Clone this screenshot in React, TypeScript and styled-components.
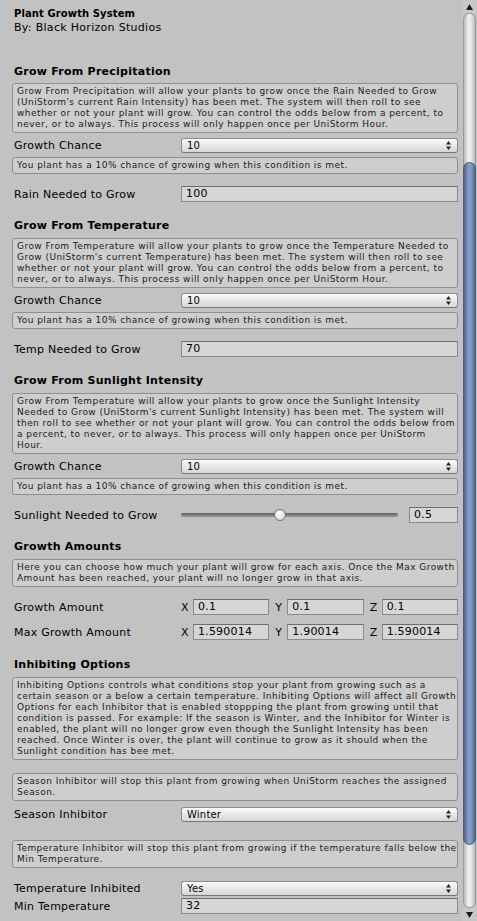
import React from "react";
import styled, { createGlobalStyle } from "styled-components";

const GlobalStyle = createGlobalStyle`
  html, body {
    margin: 0;
    padding: 0;
    background: #c2c2c2;
  }
  body {
    font-family: "DejaVu Sans", Verdana, sans-serif;
    color: #000000;
  }
`;

const Page = styled.div`
  display: flex;
  flex-direction: row;
  width: 477px;
  height: 921px;
  overflow: hidden;
  background-color: #c2c2c2;
`;

const Content = styled.div`
  flex: 1;
  display: flex;
  flex-direction: column;
  padding: 6px 4px 0 12px;
  min-width: 0;
`;

const Title = styled.div`
  padding-left: 2px;
  font-size: 10px;
  font-weight: 700;
  line-height: 16px;
  letter-spacing: 0.1px;
`;

const Subtitle = styled.div`
  margin-top: -2px;
  padding-left: 2px;
  font-size: 11px;
  line-height: 16px;
  letter-spacing: 0.3px;
`;

const SectionHeader = styled.div<{ $top: number }>`
  margin-top: ${(p) => p.$top}px;
  padding-left: 2px;
  font-size: 11px;
  font-weight: 700;
  line-height: 16px;
  letter-spacing: 0.25px;
`;

const HelpBox = styled.div<{ $top: number }>`
  margin-top: ${(p) => p.$top}px;
  padding: 2px 2px 2px 4px;
  border: 1px solid #8f8f8f;
  border-radius: 3px;
  background-color: #cecece;
  color: #1c1c1c;
  font-size: 9px;
  letter-spacing: 0.45px;
  line-height: 11px;
`;

const HelpLine = styled.div`
  white-space: nowrap;
`;

const FieldRow = styled.div<{ $top: number }>`
  margin-top: ${(p) => p.$top}px;
  height: 18px;
  display: flex;
  flex-direction: row;
  align-items: center;
`;

const Label = styled.div`
  width: 167px;
  padding-left: 2px;
  flex-shrink: 0;
  font-size: 11px;
  letter-spacing: 0.25px;
`;

const Controls = styled.div`
  flex: 1;
  display: flex;
  flex-direction: row;
  align-items: center;
  gap: 6px;
  min-width: 0;
`;

const TextField = styled.div<{ $width?: number }>`
  ${(p) => (p.$width ? `width: ${p.$width}px;` : "flex: 1;")}
  box-sizing: border-box;
  height: 16px;
  padding: 0 4px;
  border: 1px solid #8a8a8a;
  border-top-color: #6e6e6e;
  background-color: #d6d6d6;
  font-size: 11px;
  letter-spacing: 0.2px;
  line-height: 14px;
  white-space: nowrap;
  overflow: hidden;
`;

const Dropdown = styled.div`
  flex: 1;
  box-sizing: border-box;
  height: 15px;
  display: flex;
  flex-direction: row;
  align-items: center;
  justify-content: space-between;
  padding: 0 6px 0 5px;
  border: 1px solid #8c8c8c;
  border-bottom-color: #767676;
  border-radius: 3px;
  background: linear-gradient(#fbfbfb, #e4e4e4 60%, #d6d6d6);
  font-size: 10px;
  letter-spacing: 0.2px;
`;

const VectorPart = styled.div`
  flex: 1;
  display: flex;
  flex-direction: row;
  align-items: center;
  min-width: 0;
`;

const AxisLetter = styled.span`
  width: 12px;
  flex-shrink: 0;
  font-size: 11px;
`;

const SliderTrack = styled.div`
  flex: 1;
  position: relative;
  height: 4px;
  margin-right: 5px;
  border-radius: 2px;
  background: linear-gradient(#5f5f5f, #9c9c9c);
`;

const SliderHandle = styled.div`
  position: absolute;
  top: -4px;
  width: 10px;
  height: 10px;
  margin-left: -6px;
  border: 1px solid #6f6f6f;
  border-radius: 50%;
  background: radial-gradient(circle at 40% 35%, #ffffff, #dcdcdc 70%, #c4c4c4);
`;

const Scrollbar = styled.div`
  width: 15px;
  display: flex;
  flex-direction: column;
  align-items: stretch;
`;

const ScrollArrow = styled.div`
  height: 13px;
  display: flex;
  align-items: center;
  justify-content: center;
  background-color: #c8c8c8;
`;

const ScrollTrack = styled.div`
  flex: 1;
  display: flex;
  flex-direction: column;
  margin: 0 1px 0 1px;
  border: 1px solid #9a9a9a;
  border-radius: 7px;
  background: linear-gradient(to right, #b9b9b9, #f1f1f1 40%, #e6e6e6 65%, #bcbcbc);
`;

const ScrollThumb = styled.div`
  margin-top: 148px;
  height: 681px;
  margin-left: -1px;
  margin-right: -1px;
  border: 1px solid #4a5c80;
  border-radius: 7px;
  background: linear-gradient(to right, #4e6490, #8da0c6 45%, #7e92ba 70%, #50658f);
`;

const PopupArrows = () => (
  <svg width="5" height="9" viewBox="0 0 5 9">
    <polygon points="2.5,0 5,3.5 0,3.5" fill="#222" />
    <polygon points="0,5.5 5,5.5 2.5,9" fill="#222" />
  </svg>
);

const ArrowGlyph = ({ down }: { down?: boolean }) => (
  <svg width="7" height="6" viewBox="0 0 7 6">
    {down ? (
      <polygon points="0,0 7,0 3.5,6" fill="#1a1a1a" />
    ) : (
      <polygon points="3.5,0 7,6 0,6" fill="#1a1a1a" />
    )}
  </svg>
);

const Select = ({ value }: { value: string }) => (
  <Dropdown>
    <span>{value}</span>
    <PopupArrows />
  </Dropdown>
);

const Help = ({ top, lines }: { top: number; lines: string[] }) => (
  <HelpBox $top={top}>
    {lines.map((line, i) => (
      <HelpLine key={i}>{line}</HelpLine>
    ))}
  </HelpBox>
);

const Vector3 = ({ x, y, z }: { x: string; y: string; z: string }) => (
  <Controls>
    {[
      ["X", x],
      ["Y", y],
      ["Z", z],
    ].map(([axis, val]) => (
      <VectorPart key={axis}>
        <AxisLetter>{axis}</AxisLetter>
        <TextField>{val}</TextField>
      </VectorPart>
    ))}
  </Controls>
);

const CHANCE_NOTE = ["You plant has a 10% chance of growing when this condition is met."];

const RAIN_HELP = [
  "Grow From Precipitation will allow your plants to grow once the Rain Needed to Grow",
  "(UniStorm's current Rain Intensity) has been met. The system will then roll to see",
  "whether or not your plant will grow. You can control the odds below from a percent, to",
  "never, or to always. This process will only happen once per UniStorm Hour.",
];

const TEMP_HELP = [
  "Grow From Temperature will allow your plants to grow once the Temperature Needed to",
  "Grow (UniStorm's current Temperature) has been met. The system will then roll to see",
  "whether or not your plant will grow. You can control the odds below from a percent, to",
  "never, or to always. This process will only happen once per UniStorm Hour.",
];

const SUN_HELP = [
  "Grow From Temperature will allow your plants to grow once the Sunlight Intensity",
  "Needed to Grow (UniStorm's current Sunlight Intensity) has been met. The system will",
  "then roll to see whether or not your plant will grow. You can control the odds below from",
  "a percent, to never, or to always. This process will only happen once per UniStorm",
  "Hour.",
];

const AMOUNT_HELP = [
  "Here you can choose how much your plant will grow for each axis. Once the Max Growth",
  "Amount has been reached, your plant will no longer grow in that axis.",
];

const INHIBIT_HELP = [
  "Inhibiting Options controls what conditions stop your plant from growing such as a",
  "certain season or a below a certain temperature. Inhibiting Options will affect all Growth",
  "Options for each Inhibitor that is enabled stoppping the plant from growing until that",
  "condition is passed. For example: If the season is Winter, and the Inhibitor for Winter is",
  "enabled, the plant will no longer grow even though the Sunlight Intensity has been",
  "reached. Once Winter is over, the plant will continue to grow as it should when the",
  "Sunlight condition has bee met.",
];

const SEASON_HELP = [
  "Season Inhibitor will stop this plant from growing when UniStorm reaches the assigned",
  "Season.",
];

const MIN_TEMP_HELP = [
  "Temperature Inhibitor will stop this plant from growing if the temperature falls below the",
  "Min Temperature.",
];

export default function App() {
  const sliderValue = 0.455;
  return (
    <Page>
      <GlobalStyle />
      <Content>
        <Title>Plant Growth System</Title>
        <Subtitle>By: Black Horizon Studios</Subtitle>

        <SectionHeader $top={28}>Grow From Precipitation</SectionHeader>
        <Help top={3} lines={RAIN_HELP} />
        <FieldRow $top={3}>
          <Label>Growth Chance</Label>
          <Controls>
            <Select value="10" />
          </Controls>
        </FieldRow>
        <Help top={3} lines={CHANCE_NOTE} />
        <FieldRow $top={11}>
          <Label>Rain Needed to Grow</Label>
          <Controls>
            <TextField>100</TextField>
          </Controls>
        </FieldRow>

        <SectionHeader $top={15}>Grow From Temperature</SectionHeader>
        <Help top={4} lines={TEMP_HELP} />
        <FieldRow $top={3}>
          <Label>Growth Chance</Label>
          <Controls>
            <Select value="10" />
          </Controls>
        </FieldRow>
        <Help top={3} lines={CHANCE_NOTE} />
        <FieldRow $top={11}>
          <Label>Temp Needed to Grow</Label>
          <Controls>
            <TextField>70</TextField>
          </Controls>
        </FieldRow>

        <SectionHeader $top={15}>Grow From Sunlight Intensity</SectionHeader>
        <Help top={4} lines={SUN_HELP} />
        <FieldRow $top={3}>
          <Label>Growth Chance</Label>
          <Controls>
            <Select value="10" />
          </Controls>
        </FieldRow>
        <Help top={3} lines={CHANCE_NOTE} />
        <FieldRow $top={11}>
          <Label>Sunlight Needed to Grow</Label>
          <Controls>
            <SliderTrack>
              <SliderHandle style={{ left: `${sliderValue * 100}%` }} />
            </SliderTrack>
            <TextField $width={49}>0.5</TextField>
          </Controls>
        </FieldRow>

        <SectionHeader $top={15}>Growth Amounts</SectionHeader>
        <Help top={4} lines={AMOUNT_HELP} />
        <FieldRow $top={11}>
          <Label>Growth Amount</Label>
          <Vector3 x="0.1" y="0.1" z="0.1" />
        </FieldRow>
        <FieldRow $top={7}>
          <Label>Max Growth Amount</Label>
          <Vector3 x="1.590014" y="1.90014" z="1.590014" />
        </FieldRow>

        <SectionHeader $top={16}>Inhibiting Options</SectionHeader>
        <Help top={4} lines={INHIBIT_HELP} />
        <Help top={13} lines={SEASON_HELP} />
        <FieldRow $top={4}>
          <Label>Season Inhibitor</Label>
          <Controls>
            <Select value="Winter" />
          </Controls>
        </FieldRow>
        <Help top={17} lines={MIN_TEMP_HELP} />
        <FieldRow $top={11}>
          <Label>Temperature Inhibited</Label>
          <Controls>
            <Select value="Yes" />
          </Controls>
        </FieldRow>
        <FieldRow $top={0}>
          <Label>Min Temperature</Label>
          <Controls>
            <TextField>32</TextField>
          </Controls>
        </FieldRow>
      </Content>

      <Scrollbar>
        <ScrollArrow>
          <ArrowGlyph />
        </ScrollArrow>
        <ScrollTrack>
          <ScrollThumb />
        </ScrollTrack>
        <ScrollArrow>
          <ArrowGlyph down />
        </ScrollArrow>
      </Scrollbar>
    </Page>
  );
}
